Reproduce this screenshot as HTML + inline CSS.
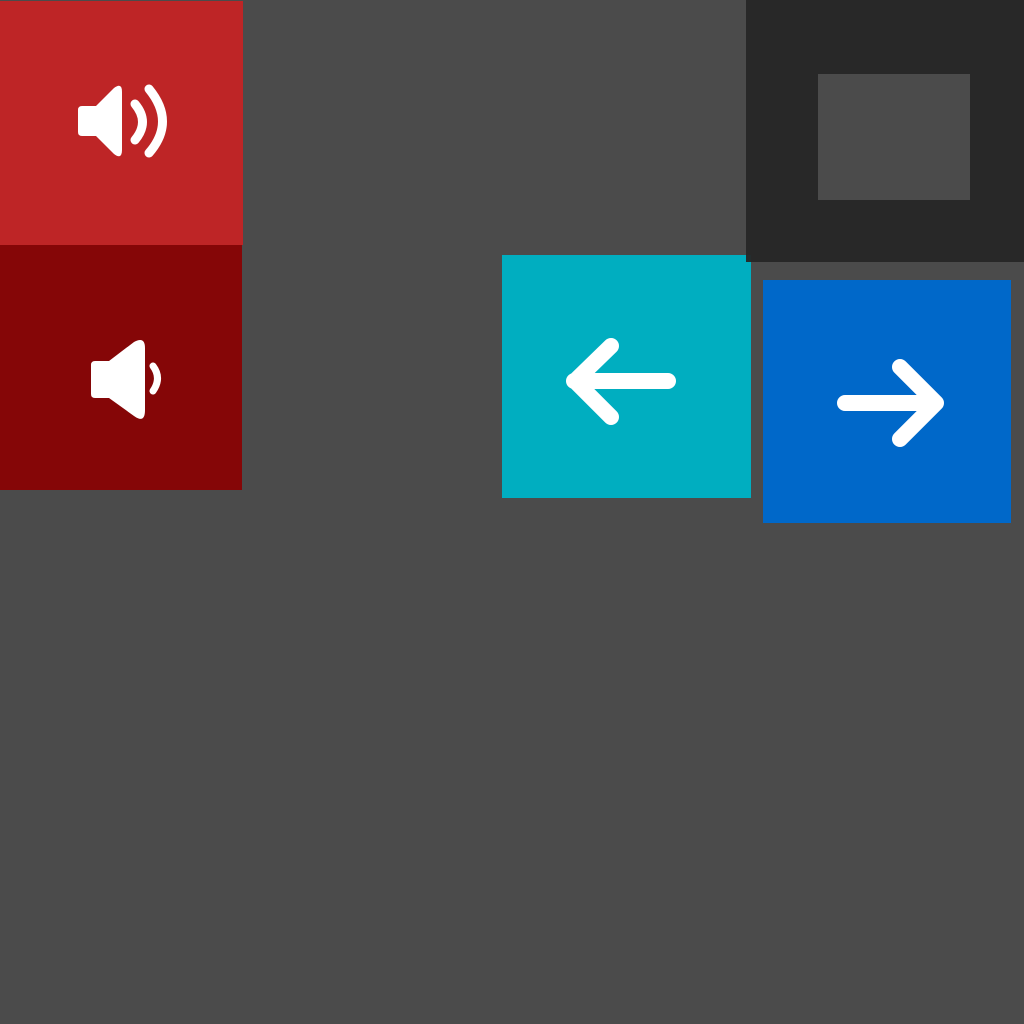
<!DOCTYPE html><html><head><style>
body{margin:0;width:1024px;height:1024px;background:#4b4b4b;position:relative;overflow:hidden}
div{position:absolute}
</style></head><body>
<div style="left:0;top:1px;width:243px;height:244px;background:#be2526"></div>
<div style="left:0;top:245px;width:242px;height:245px;background:#850607"></div>
<div style="left:502px;top:255px;width:249px;height:243px;background:#00aec0"></div>
<div style="left:746px;top:0;width:278px;height:262px;background:rgba(38,38,38,0.95)"></div>
<div style="left:818px;top:74px;width:152px;height:126px;background:#4b4b4b"></div>
<div style="left:763px;top:280px;width:248px;height:243px;background:#0068c9"></div>
<svg width="1024" height="1024" style="position:absolute;left:0;top:0">
<g fill="#fff">
<path d="M82 106 H96 L114 88 Q122 82 122 92 V150 Q122 160 114 154 L96 136 H82 Q78 136 78 132 V110 Q78 106 82 106Z"/>
<path d="M95 361 H109 L134 342 Q145 336 145 348 V410 Q145 424 134 416 L109 398 H95 Q91 398 91 394 V365 Q91 361 95 361Z"/>
</g>
<g fill="none" stroke="#fff" stroke-linecap="round">
<path d="M135 104 Q150 122 135 140" stroke-width="9"/>
<path d="M149 89 Q176 122 149 153" stroke-width="9"/>
<path d="M153 366 Q162 378 153 391" stroke-width="7"/>
<path d="M668 381 H574 M611 346 L575 381 L611 417" stroke-width="16" stroke-linejoin="round"/>
<path d="M845 403 H936 M900 367 L936 403 L900 439" stroke-width="16" stroke-linejoin="round"/>
</g>
</svg>
</body></html>
